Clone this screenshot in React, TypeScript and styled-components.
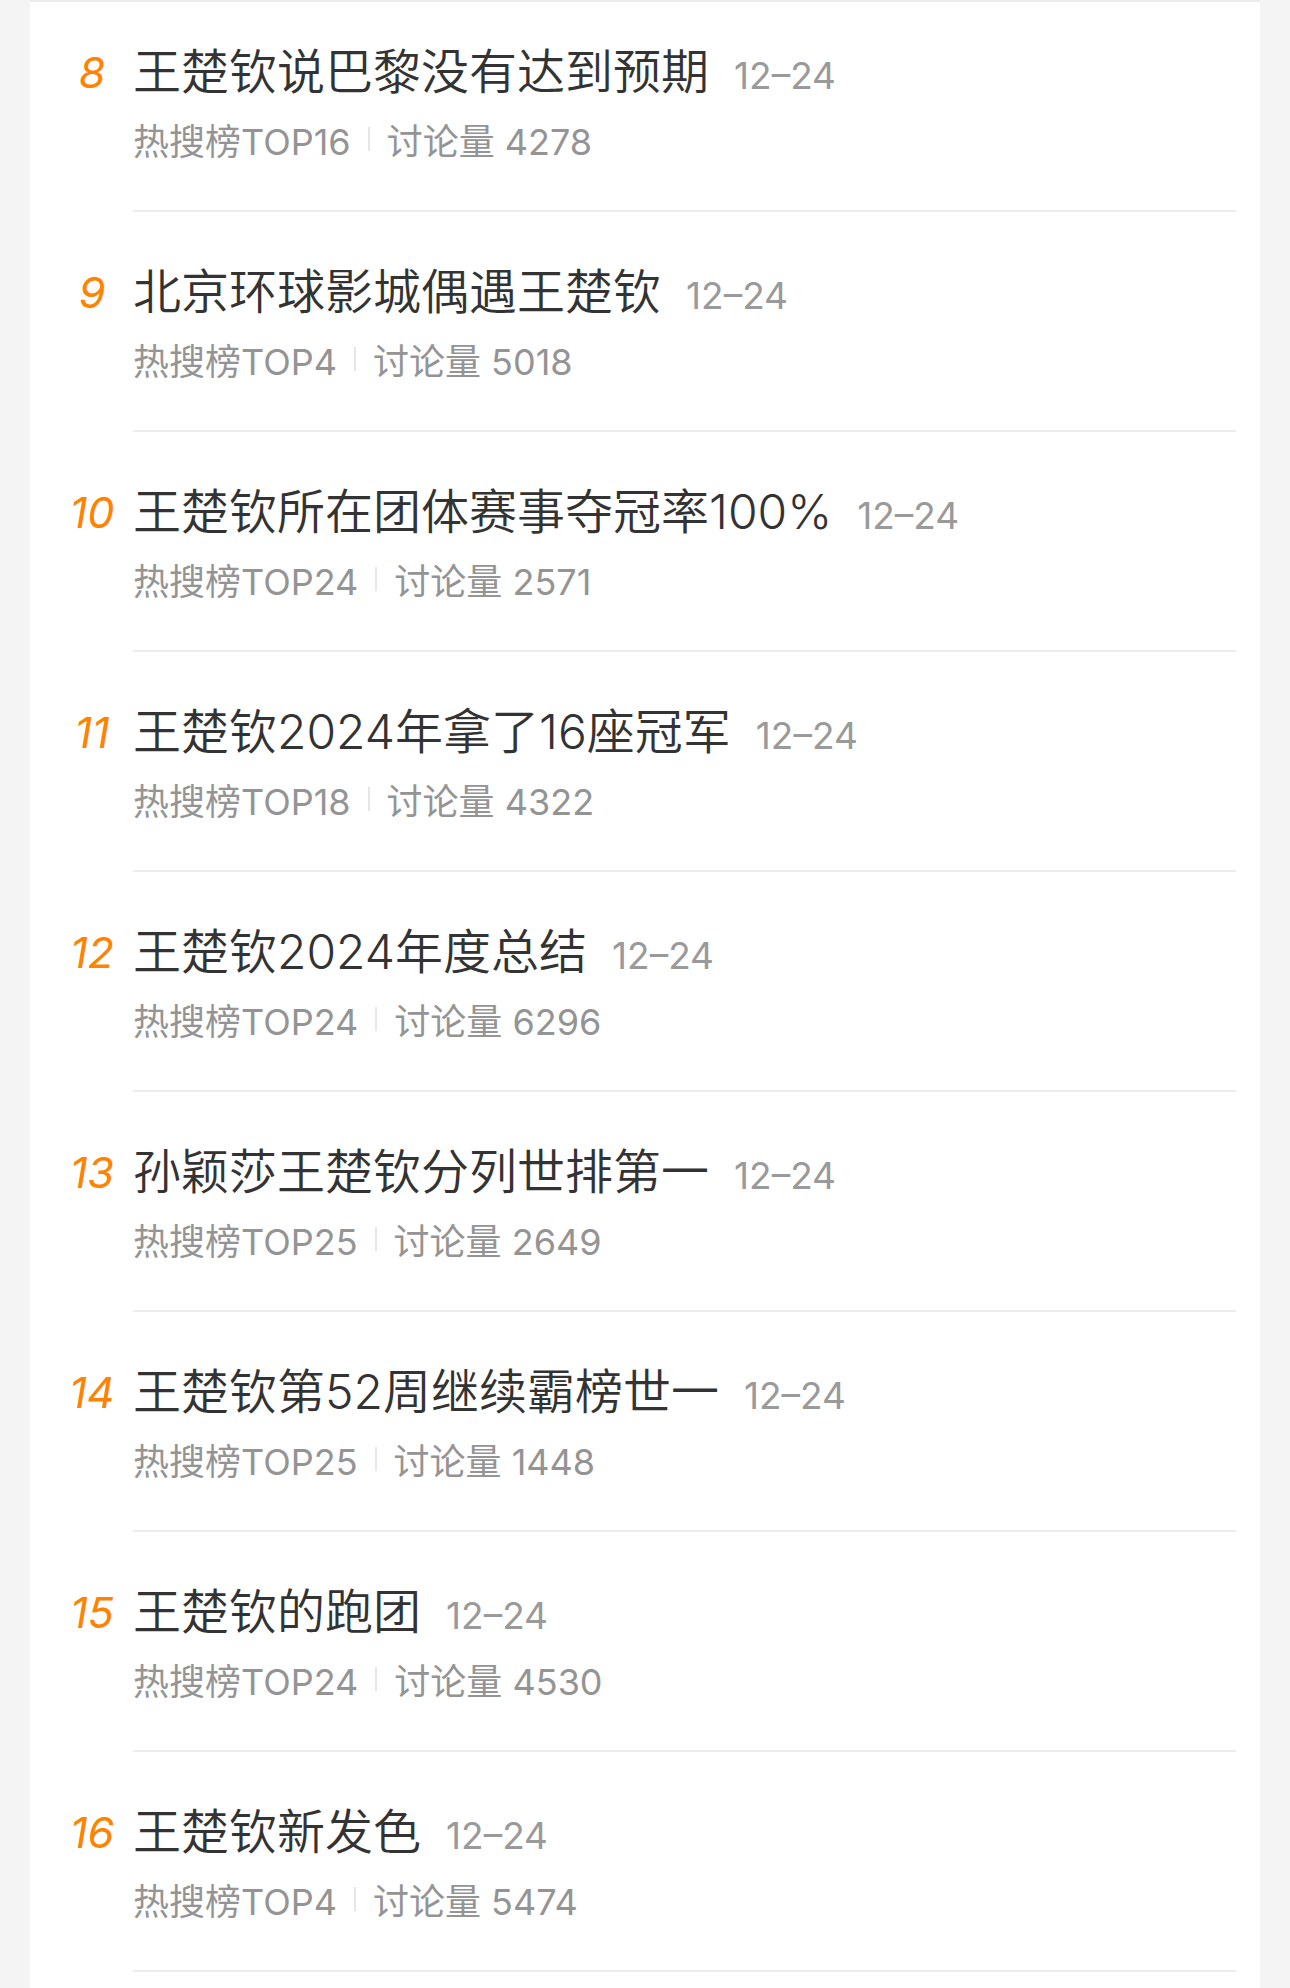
import styled, { createGlobalStyle } from "styled-components";

const GlobalStyle = createGlobalStyle`
    html, body {
        margin: 0;
        padding: 0;
        background-color: #f4f4f4;
    }
    body {
        font-family: "Inter", "Noto Sans CJK SC", sans-serif;
    }
`;

const Page = styled.div`
    width: 1290px;
    height: 1988px;
    padding: 0 30px;
    box-sizing: border-box;
    overflow: hidden;
`;

const Card = styled.div`
    height: 100%;
    background-color: #ffffff;
    border-top: 2px solid #ebebeb;
    overflow: hidden;
`;

const List = styled.ul`
    list-style: none;
    margin: -10px 0 0;
    padding: 0 24px 0 30px;
`;

const Row = styled.li`
    display: flex;
    align-items: baseline;
    height: 220px;
    padding-top: 50px;
    box-sizing: border-box;
`;

const Rank = styled.span`
    flex: 0 0 64px;
    margin-right: 9px;
    text-align: center;
    font-size: 43px;
    line-height: 60px;
    font-style: italic;
    color: #ff8200;
`;

const Body = styled.div`
    flex: 1;
    align-self: stretch;
    margin-top: -50px;
    padding-top: 50px;
    border-bottom: 2px solid #ececec;
`;

const TitleLine = styled.div`
    display: flex;
    align-items: baseline;
    height: 60px;
    line-height: 60px;
`;

const Title = styled.span`
    font-size: 48px;
    font-weight: 350;
    color: #333333;
    white-space: nowrap;
`;

const Date = styled.span`
    margin-left: 25px;
    font-size: 37px;
    color: #9a9a9a;
`;

const Meta = styled.div`
    display: flex;
    align-items: center;
    height: 44px;
    margin-top: 15px;
    font-size: 36px;
    color: #949494;
`;

const Sep = styled.span`
    width: 2px;
    height: 24px;
    margin: 0 17px;
    background-color: #e6e6e6;
`;

type Topic = { rank: number; title: string; top: number; count: number };

const topics: Topic[] = [
    { rank: 8, title: "王楚钦说巴黎没有达到预期", top: 16, count: 4278 },
    { rank: 9, title: "北京环球影城偶遇王楚钦", top: 4, count: 5018 },
    { rank: 10, title: "王楚钦所在团体赛事夺冠率100%", top: 24, count: 2571 },
    { rank: 11, title: "王楚钦2024年拿了16座冠军", top: 18, count: 4322 },
    { rank: 12, title: "王楚钦2024年度总结", top: 24, count: 6296 },
    { rank: 13, title: "孙颖莎王楚钦分列世排第一", top: 25, count: 2649 },
    { rank: 14, title: "王楚钦第52周继续霸榜世一", top: 25, count: 1448 },
    { rank: 15, title: "王楚钦的跑团", top: 24, count: 4530 },
    { rank: 16, title: "王楚钦新发色", top: 4, count: 5474 },
];

const App = () => {
    return (
        <>
            <GlobalStyle />
            <Page>
                <Card>
                    <List>
                        {topics.map((t) => (
                            <Row key={t.rank}>
                                <Rank>{t.rank}</Rank>
                                <Body>
                                    <TitleLine>
                                        <Title>{t.title}</Title>
                                        <Date>12–24</Date>
                                    </TitleLine>
                                    <Meta>
                                        <span>热搜榜TOP{t.top}</span>
                                        <Sep />
                                        <span>讨论量 {t.count}</span>
                                    </Meta>
                                </Body>
                            </Row>
                        ))}
                    </List>
                </Card>
            </Page>
        </>
    );
};

export default App;
